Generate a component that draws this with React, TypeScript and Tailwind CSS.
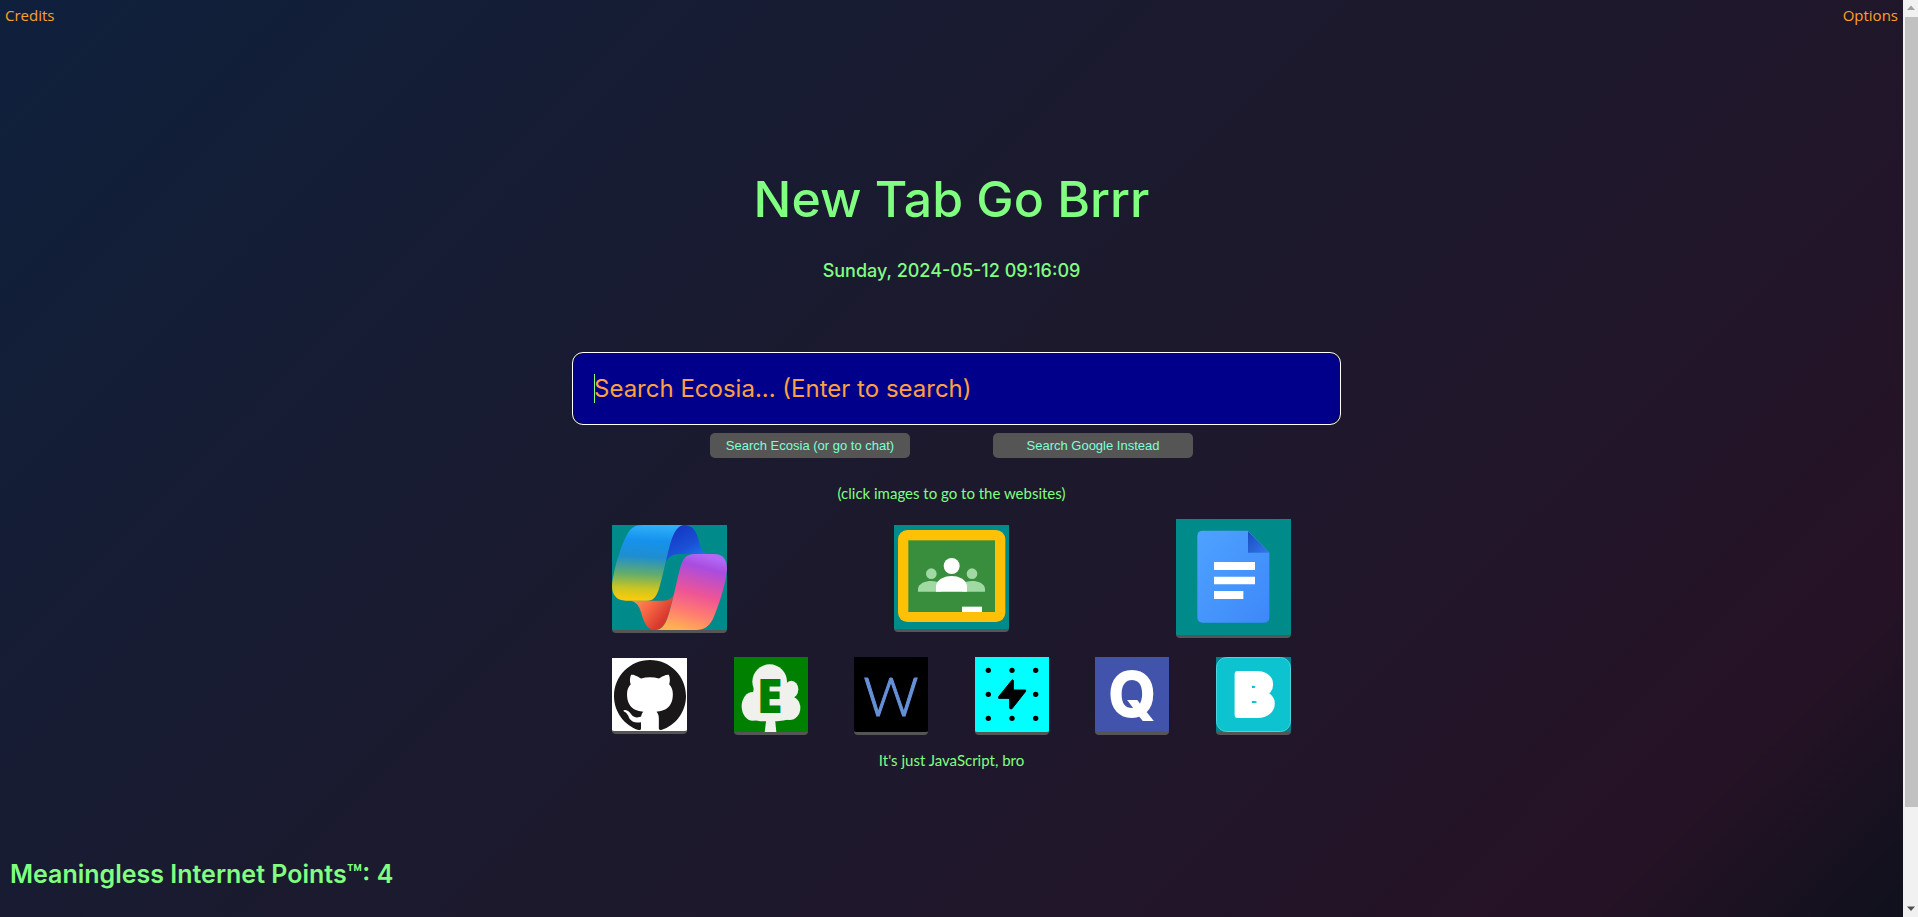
import React from "react";
import { SiGithub } from "react-icons/si";

function CopilotLogo() {
  return (
    <svg viewBox="36 45 345 315" preserveAspectRatio="none" className="block h-[105px] w-full" aria-hidden="true">
      <defs>
        <linearGradient id="cp-left" x1="0.45" y1="0" x2="0.4" y2="1">
          <stop offset="0" stopColor="#2fb0f7" />
          <stop offset="0.2" stopColor="#1592ee" />
          <stop offset="0.42" stopColor="#1f8ed0" />
          <stop offset="0.65" stopColor="#63ac6c" />
          <stop offset="0.84" stopColor="#c9c522" />
          <stop offset="1" stopColor="#ffcb0a" />
        </linearGradient>
        <linearGradient id="cp-blue" x1="0.2" y1="0.1" x2="0.8" y2="1">
          <stop offset="0" stopColor="#1439c4" />
          <stop offset="0.5" stopColor="#1a4fd6" />
          <stop offset="1" stopColor="#1a84ee" />
        </linearGradient>
        <linearGradient id="cp-right" x1="0.6" y1="0" x2="0.35" y2="1">
          <stop offset="0" stopColor="#b268f5" />
          <stop offset="0.15" stopColor="#a94ce0" />
          <stop offset="0.5" stopColor="#ee5496" />
          <stop offset="0.75" stopColor="#ff7b72" />
          <stop offset="1" stopColor="#ffb252" />
        </linearGradient>
        <linearGradient id="cp-orange" x1="0.1" y1="0" x2="0.9" y2="0.5">
          <stop offset="0" stopColor="#ff9a5c" />
          <stop offset="0.5" stopColor="#f86a45" />
          <stop offset="1" stopColor="#d8392f" />
        </linearGradient>
      </defs>
      <path fill="url(#cp-blue)" d="M250 45C276 45 286 60 292 78C301 108 302 132 332 132H238C216 132 206 142 195 158C203 105 212 45 250 45Z" />
      <path fill="url(#cp-orange)" d="M84 272C140 270 112 360 168 360C202 358 208 300 222 252C216 266 206 272 190 272Z" />
      <path fill="url(#cp-left)" d="M128 45H252C222 48 213 94 202 136C195 162 190 190 182 218C172 254 166 272 140 272H78C48 272 36 252 36 228C40 180 62 110 80 76C92 54 104 45 128 45Z" />
      <path fill="url(#cp-right)" d="M284 132H342C370 132 381 150 381 176C377 228 354 290 340 324C328 350 312 360 288 360H168C198 358 206 314 217 272C226 238 232 204 240 176C248 146 258 132 284 132Z" />
    </svg>
  );
}

function ClassroomLogo() {
  return (
    <svg viewBox="882 45 345 312" className="block h-[104px] w-full" aria-hidden="true">
      <rect x="894" y="60" width="322" height="276" rx="28" fill="#ffc107" />
      <rect x="925" y="91" width="260" height="215" fill="#388e3c" />
      <g fill="#a0d9a3">
        <circle cx="994" cy="191" r="16" />
        <circle cx="1116" cy="191" r="16" />
        <path d="M954 245V236C956 220 976 213 994 213C1004 213 1016 216 1024 220V245Z" />
        <path d="M1155 245V236C1153 220 1134 213 1116 213C1106 213 1094 216 1086 220V245Z" />
      </g>
      <circle cx="1055" cy="168" r="24" fill="#fff" />
      <path d="M1008 245V228C1010 208 1034 198 1055 198C1076 198 1099 208 1101 228V245Z" fill="#fff" />
      <rect x="1086" y="290" width="60" height="16" fill="#fff" />
    </svg>
  );
}

function DocsLogo() {
  return (
    <svg viewBox="228 27 345 348" className="block h-[116px] w-full" aria-hidden="true">
      <defs>
        <linearGradient id="doc-page" x1="0" y1="0" x2="1" y2="1">
          <stop offset="0" stopColor="#4ea2ff" />
          <stop offset="1" stopColor="#3e88fa" />
        </linearGradient>
        <linearGradient id="doc-fold" x1="0" y1="0" x2="1" y2="1">
          <stop offset="0" stopColor="#174cc0" />
          <stop offset="1" stopColor="#3478ec" />
        </linearGradient>
      </defs>
      <path d="M308 62H444L508 128V322Q508 338 492 338H308Q292 338 292 322V78Q292 62 308 62Z" fill="url(#doc-page)" />
      <path d="M444 64L508 128H444Z" fill="url(#doc-fold)" />
      <path d="M342 156H465V180H342ZM342 200H465V223H342ZM342 243H430V267H342Z" fill="#fff" />
    </svg>
  );
}

function TreeLogo() {
  return (
    <svg viewBox="399 36 222 225" preserveAspectRatio="none" className="block h-[75px] w-full" aria-hidden="true">
      <g fill="#f0f0ec">
        <circle cx="506" cy="110" r="52" />
        <ellipse cx="571" cy="133" rx="21" ry="26" />
        <ellipse cx="455" cy="184" rx="33" ry="43" />
        <ellipse cx="566" cy="189" rx="32" ry="36" />
        <path d="M462 110H552L568 158V222Q548 228 528 229H478Q450 224 442 218Z" />
        <path d="M496 222H522L526 261H491Z" />
      </g>
      <text x="467" y="203" fontSize="141" fontWeight="800" fontFamily="'Open Sans', sans-serif" fill="#008000">E</text>
    </svg>
  );
}

function WLogo() {
  return (
    <svg viewBox="0 0 74 75" className="block h-[75px] w-full" aria-hidden="true">
      <text x="37" y="59" textAnchor="middle" fontSize="54" fontWeight="300" fontFamily="Lato, sans-serif" fill="#6690d8" stroke="#6690d8">W</text>
    </svg>
  );
}

function BoltLogo() {
  return (
    <svg viewBox="105 36 222 225" className="block h-[75px] w-full" aria-hidden="true">
      {[76, 148, 220].map((y) =>
        [145, 216, 287].map((x) =>
          x === 216 && y === 148 ? null : <circle key={`${x}-${y}`} cx={x} cy={y} r="8" />
        )
      )}
      <path d="M217 104L176 155V160H209V189Q211 194 216 191L257 139V135H220V106Z" strokeLinejoin="round" stroke="#000" strokeWidth="3" />
    </svg>
  );
}

function QLogo() {
  return (
    <svg viewBox="0 0 74 75" className="block h-[75px] w-full" aria-hidden="true">
      <text x="37" y="59" textAnchor="middle" fontSize="60" fontWeight="700" fontFamily="Inter, sans-serif" fill="#fff" stroke="#fff" strokeWidth="2">Q</text>
    </svg>
  );
}

function BLogo() {
  return (
    <svg viewBox="0 0 75 75" className="block h-[75px] w-full" aria-hidden="true">
      <rect x="0.5" y="0.5" width="74" height="74" rx="10" fill="#0cc3cf" stroke="#4fd3dc" />
      <text x="38" y="58" textAnchor="middle" fontSize="57" fontWeight="900" fontFamily="Inter, sans-serif" fill="#fff" stroke="#fff" strokeWidth="6" strokeLinejoin="round">B</text>
    </svg>
  );
}

const tile = "block rounded-b border-b-[3px] border-[#555]";

function Scrollbar() {
  return (
    <div className="flex w-[15px] shrink-0 flex-col items-center bg-[#f1f1f1]" aria-hidden="true">
      <svg viewBox="0 0 15 17" className="h-[17px] w-[15px] shrink-0">
        <path d="M4 10L8 5.5L12 10Z" fill="#a0a0a0" />
      </svg>
      <div className="flex w-full grow flex-col pl-[2px]">
        <div className="h-[89.5%] bg-[#c1c1c1]" />
      </div>
      <svg viewBox="0 0 15 17" className="h-[17px] w-[15px] shrink-0">
        <path d="M4 6.5L8 11L12 6.5Z" fill="#505050" />
      </svg>
    </div>
  );
}

export default function App() {
  return (
    <div className="flex min-h-screen">
      <div className="flex min-w-0 grow flex-col bg-[linear-gradient(135deg,#0f203c_0%,#1b1a2e_43%,#1e182c_60%,#261226_88%,#0f111c_100%)] font-['Inter',sans-serif] text-[#80ff80]">
        <header className="flex justify-between px-[5px] pt-[3px] font-['Open_Sans',sans-serif] text-[15px] leading-6 text-[#ffa028]">
          <a href="#credits">Credits</a>
          <a href="#options">Options</a>
        </header>

        <main className="flex grow flex-col items-center pt-[140px]">
          <h1 className="text-[50px] leading-[64px] font-medium">New Tab Go Brrr</h1>
          <p className="mt-7 text-lg leading-6 font-medium">Sunday, 2024-05-12 09:16:09</p>

          <form className="mt-[69px] flex flex-col items-center" onSubmit={(e) => e.preventDefault()}>
            <div className="relative ml-[10px] w-[769px] rounded-[11px] border border-white bg-[#10101c] p-px">
              <input
                type="text"
                aria-label="Search Ecosia"
                placeholder="Search Ecosia... (Enter to search)"
                className="peer block h-[69px] w-full rounded-[9px] bg-[#00008b] px-5 text-2xl text-[#80ff80] outline-none placeholder:text-[#ffa040] placeholder:opacity-100"
              />
              <span className="absolute top-[21px] left-[21px] hidden h-[29px] w-px bg-[#80ff80] peer-placeholder-shown:block peer-focus:hidden" />
            </div>
            <div className="mt-2 flex gap-[83px] font-['Liberation_Sans',Arial,sans-serif] text-[13px] text-[#7fffd4]">
              <button type="submit" className="h-[25px] w-[200px] rounded-[5px] bg-[#555]">
                Search Ecosia (or go to chat)
              </button>
              <button type="button" className="h-[25px] w-[200px] rounded-[5px] bg-[#555]">
                Search Google Instead
              </button>
            </div>
          </form>

          <p className="mt-[23px] font-['Lato',sans-serif] text-[15px] leading-6">(click images to go to the websites)</p>

          <nav className="mt-[14px] w-[679px] max-w-full" aria-label="Websites">
            <div className="flex items-center justify-between">
              <a href="#copilot" aria-label="Copilot" className={`${tile} w-[115px] bg-[#008b8b]`}><CopilotLogo /></a>
              <a href="#classroom" aria-label="Classroom" className={`${tile} w-[115px] bg-[#008b8b]`}><ClassroomLogo /></a>
              <a href="#docs" aria-label="Docs" className={`${tile} w-[115px] bg-[#008b8b]`}><DocsLogo /></a>
            </div>
            <div className="mt-[19px] flex items-center justify-between">
              <a href="#github" aria-label="GitHub" className={`${tile} w-[75px] bg-white`}>
                <span className="flex h-[73px] items-center justify-center">
                  <SiGithub className="size-[72px] text-[#191717]" />
                </span>
              </a>
              <a href="#ecosia" aria-label="Tree" className={`${tile} w-[74px] bg-[#008000]`}><TreeLogo /></a>
              <a href="#w" aria-label="W" className={`${tile} w-[74px] bg-black`}><WLogo /></a>
              <a href="#bolt" aria-label="Bolt" className={`${tile} w-[74px] bg-[#00ffff]`}><BoltLogo /></a>
              <a href="#q" aria-label="Q" className={`${tile} w-[74px] bg-[#4253ac]`}><QLogo /></a>
              <a href="#b" aria-label="B" className={`${tile} w-[75px] bg-[#00808b]`}><BLogo /></a>
            </div>
          </nav>

          <p className="mt-[13px] font-['Lato',sans-serif] text-[15px] leading-6">It's just JavaScript, bro</p>
        </main>

        <footer className="px-[10px] pb-[27px] text-[25px] leading-8 font-semibold">Meaningless Internet Points™: 4</footer>
      </div>
      <Scrollbar />
    </div>
  );
}
